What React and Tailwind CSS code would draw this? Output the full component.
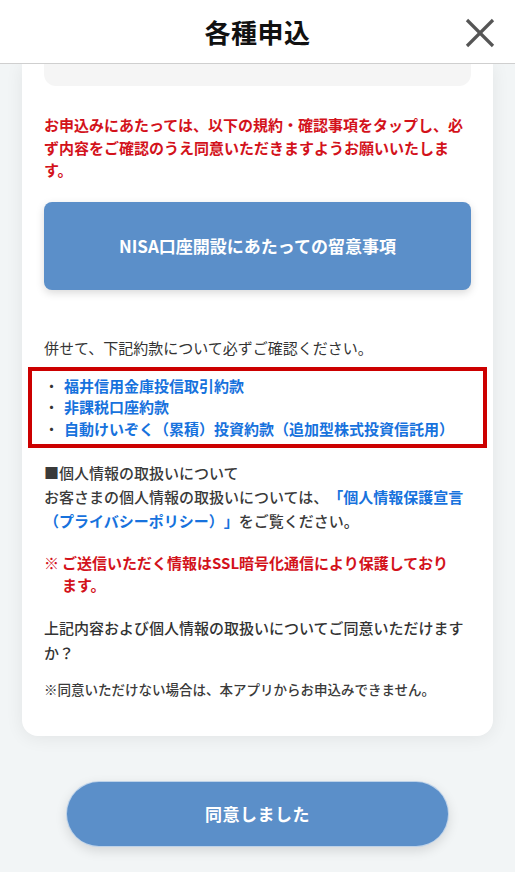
export default function App() {
  const jp = { fontFamily: '"Noto Sans CJK JP", "Noto Sans", sans-serif' };
  return (
    <div className="min-h-[872px] bg-[#f2f5f6] flex flex-col [text-spacing-trim:space-all]" style={jp}>
      {/* header bar */}
      <header className="relative h-[64px] shrink-0 bg-white border-b border-[#cfcfcf] flex items-center justify-center">
        <h1 className="text-[26px] font-bold text-[#111] leading-none tracking-[0.5px]">各種申込</h1>
        <button className="absolute right-[19px] top-[17px] w-[32px] h-[32px] flex items-center justify-center" aria-label="閉じる">
          <svg width="30" height="30" viewBox="0 0 30 30" fill="none" stroke="#555" strokeWidth="3.2" strokeLinecap="butt">
            <path d="M2 2 L28 28" />
            <path d="M28 2 L2 28" />
          </svg>
        </button>
      </header>

      {/* consent card */}
      <div className="mx-[22px] bg-white rounded-b-[16px] shadow-[0_2px_18px_rgba(0,0,0,0.07)] px-[22px] pb-[37px]">
        <div className="h-[22px] rounded-b-[12px] bg-[#f5f5f5]" />

        <p className="mt-[28px] text-[15px] leading-[22.5px] font-bold text-[#d3121b]">
          お申込みにあたっては、以下の規約・確認事項をタップし、必ず内容をご確認のうえ同意いただきますようお願いいたします。
        </p>

        <button className="mt-[20px] w-full h-[88px] rounded-[8px] bg-[#5b8fc9] text-white text-[17px] font-bold shadow-[0_3px_8px_rgba(0,0,0,0.15)]">
          NISA口座開設にあたっての留意事項
        </button>

        <p className="mt-[47px] text-[15px] leading-[22px] text-[#333]">
          併せて、下記約款について必ずご確認ください。
        </p>

        <ul className="-mx-[16px] mt-[8px] border-[4px] border-[#cc0000] pt-[4px] pb-[5px] pl-[12px] text-[15px] leading-[21.5px] font-bold text-[#1772dd]">
          {[
            "福井信用金庫投信取引約款",
            "非課税口座約款",
            "自動けいぞく（累積）投資約款（追加型株式投資信託用）",
          ].map((t) => (
            <li key={t} className="flex">
              <span className="w-[20px] shrink-0 text-[#333] font-normal">・</span>
              <span>{t}</span>
            </li>
          ))}
        </ul>

        <div className="mt-[13px] text-[15px] leading-[24px] font-medium text-[#3a3a3a] whitespace-nowrap">
          <p>■個人情報の取扱いについて</p>
          <p>
            お客さまの個人情報の取扱いについては、
            <span className="text-[#1772dd] font-bold">「個人情報保護宣言</span>
          </p>
          <p>
            <span className="text-[#1772dd] font-bold">（プライバシーポリシー）」</span>
            をご覧ください。
          </p>
        </div>

        <div className="mt-[19px] pr-[14px] flex text-[15px] leading-[22px] font-bold text-[#d3121b]">
          <span className="w-[18px] shrink-0">※</span>
          <span>ご送信いただく情報はSSL暗号化通信により保護しております。</span>
        </div>

        <p className="mt-[19px] text-[15px] leading-[25px] font-medium text-[#333]">
          上記内容および個人情報の取扱いについてご同意いただけますか？
        </p>

        <p className="mt-[14px] text-[13.5px] leading-[20px] font-medium text-[#3a3a3a]">
          ※同意いただけない場合は、本アプリからお申込みできません。
        </p>
      </div>

      <div className="flex justify-center mt-[45px] pb-[24px]">
        <button className="w-[383px] h-[66px] rounded-full bg-[#5b8fc9] text-white text-[17px] font-bold tracking-[0.5px] shadow-[0_4px_12px_rgba(0,0,0,0.12)] border border-white/60">
          同意しました
        </button>
      </div>
    </div>
  );
}
